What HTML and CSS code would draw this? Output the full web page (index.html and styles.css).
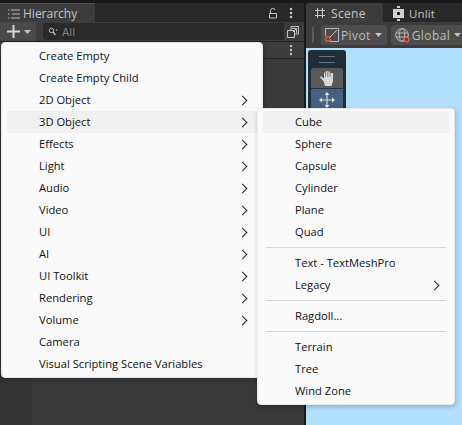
FILE: index.html
```html
<!DOCTYPE html>
<html lang="en">
<head>
<meta charset="utf-8">
<title>Hierarchy</title>
<link rel="stylesheet" href="styles.css">
</head>
<body>
<div class="editor">
  <section class="panel hierarchy">
    <div class="tabbar">
      <div class="tab tab-active">
        <svg class="ico" width="12" height="10" viewBox="0 0 12 10"><path d="M0 1h1.500M0 5h1.500M0 9h1.500M3 1h9M4 5h8M3 9h9" stroke="#bdbdbd" fill="none"/></svg>
        <span>Hierarchy</span>
      </div>
      <div class="tab-tools">
        <svg width="9" height="12" viewBox="0 0 9 12"><path d="M.5 6.500h7v4.500h-7zM1.500 6.500V3.500a2.300 2.300 0 0 1 4.500-.5" stroke="#c4c4c4" fill="none"/></svg>
        <svg width="4" height="12" viewBox="0 0 4 12"><circle cx="2" cy="2" r="1.300" fill="#c4c4c4"/><circle cx="2" cy="6" r="1.300" fill="#c4c4c4"/><circle cx="2" cy="10" r="1.300" fill="#c4c4c4"/></svg>
      </div>
    </div>
    <div class="toolbar">
      <div class="add-btn">
        <svg width="13" height="13" viewBox="0 0 13 13"><path d="M6.500 0v13M0 6.500h13" stroke="#d8d8d8" stroke-width="2" fill="none"/></svg>
        <svg width="7" height="4" viewBox="0 0 7 4"><path d="M0 0h7L3.500 4z" fill="#c4c4c4"/></svg>
      </div>
      <div class="search">
        <svg width="10" height="9" viewBox="0 0 10 9"><circle cx="3.500" cy="3.500" r="2.200" stroke="#bbb" fill="none"/><path d="M5 5l2.500 3" stroke="#bbb" stroke-width="1.300"/><path d="M7.500 2.500h2.500L8.750 4z" fill="#bbb"/></svg>
        <span>All</span>
        <div class="search-end">
          <svg width="12" height="12" viewBox="0 0 12 12"><path d="M4 4V.5h7.500V8H8M.5 4.500h7v7h-7zM5 2.500h4.500V7M9.500 2.500L6 6" stroke="#c4c4c4" fill="none"/></svg>
        </div>
      </div>
    </div>
    <div class="subbar">
      <svg width="4" height="12" viewBox="0 0 4 12"><circle cx="2" cy="2" r="1.200" fill="#c4c4c4"/><circle cx="2" cy="6" r="1.200" fill="#c4c4c4"/><circle cx="2" cy="10" r="1.200" fill="#c4c4c4"/></svg>
    </div>
    <div class="tree">
      <div class="tree-gutter"></div>
      <div class="tree-body"></div>
    </div>
  </section>

  <section class="panel scene">
    <div class="tabbar scene-tabs">
      <div class="tab scene-tab">
        <svg width="12" height="12" viewBox="0 0 12 12"><path d="M3.500 1v10M8.500 1v10M1 3.500h10M1 8.500h10" stroke="#c8c8c8" fill="none"/></svg>
        <span>Scene</span>
      </div>
      <div class="tab unlit-tab">
        <svg width="11" height="15" viewBox="0 0 11 15"><path d="M4 0h3v2H4zM0 3h11v9H0zM4 13h3v2H4z" fill="#d0d0d0"/><rect x="4" y="6" width="3" height="3" fill="#282828"/></svg>
        <span>Unlit</span>
      </div>
    </div>
    <div class="scene-toolbar">
      <div class="grip"></div>
      <div class="tool-btn">
        <svg width="14" height="14" viewBox="0 0 14 14"><path d="M3 .5h10.500V13.500H5M.5 8V.5H3M4 10l8-8" stroke="#bbb" fill="none"/><circle cx="3" cy="11" r="2.400" fill="none" stroke="#f0603a" stroke-width="1.200"/></svg>
        <span>Pivot</span>
        <svg width="7" height="4" viewBox="0 0 7 4"><path d="M0 0h7L3.500 4z" fill="#c4c4c4"/></svg>
      </div>
      <div class="tool-btn">
        <svg width="15" height="15" viewBox="0 0 15 15"><circle cx="7" cy="7" r="6.300" stroke="#bbb" fill="none"/><ellipse cx="7" cy="7" rx="2.800" ry="6.300" stroke="#bbb" fill="none"/><path d="M1 5h12M1 9h12" stroke="#bbb"/><circle cx="11.500" cy="11.500" r="2.400" fill="#4b4b4b" stroke="#f0603a" stroke-width="1.200"/></svg>
        <span>Global</span>
        <svg width="7" height="4" viewBox="0 0 7 4"><path d="M0 0h7L3.500 4z" fill="#c4c4c4"/></svg>
      </div>
    </div>
    <div class="viewport">
      <div class="overlay-tools">
        <div class="overlay-grip"></div>
        <div class="overlay-btn hand">
          <svg width="15" height="16" viewBox="0 0 15 16"><path d="M3.500 11L0 7.500l1-1.200 3 2.200V2.500h1.300V7h.7V1h1.500v6h.7V1.500h1.500V7h.7V3H13v8l-1.500 5H5z" fill="#d8d8d8"/></svg>
        </div>
        <div class="overlay-btn move">
          <svg width="16" height="16" viewBox="0 0 16 16"><path d="M8 2v12M2 8h12" stroke="#c9d6e2" stroke-width="1.200"/><path d="M8 0l2.500 3h-5zM8 16l2.500-3h-5zM0 8l3-2.500v5zM16 8l-3-2.500v5z" fill="#dbe5ee"/></svg>
        </div>
      </div>
    </div>
  </section>
</div>

<div class="menu main-menu">
  <div class="item">Create Empty</div>
  <div class="item">Create Empty Child</div>
  <div class="item arrow">2D Object</div>
  <div class="item arrow hover">3D Object</div>
  <div class="item arrow">Effects</div>
  <div class="item arrow">Light</div>
  <div class="item arrow">Audio</div>
  <div class="item arrow">Video</div>
  <div class="item arrow">UI</div>
  <div class="item arrow">AI</div>
  <div class="item arrow">UI Toolkit</div>
  <div class="item arrow">Rendering</div>
  <div class="item arrow">Volume</div>
  <div class="item">Camera</div>
  <div class="item">Visual Scripting Scene Variables</div>
</div>

<div class="menu sub-menu">
  <div class="item hover">Cube</div>
  <div class="item">Sphere</div>
  <div class="item">Capsule</div>
  <div class="item">Cylinder</div>
  <div class="item">Plane</div>
  <div class="item">Quad</div>
  <div class="sep"></div>
  <div class="item">Text - TextMeshPro</div>
  <div class="item arrow">Legacy</div>
  <div class="sep"></div>
  <div class="item">Ragdoll...</div>
  <div class="sep"></div>
  <div class="item">Terrain</div>
  <div class="item">Tree</div>
  <div class="item">Wind Zone</div>
</div>
</body>
</html>
```
FILE: styles.css
```css
* { box-sizing: border-box; }
html, body { margin: 0; padding: 0; }
body {
  width: 462px;
  height: 425px;
  overflow: hidden;
  position: relative;
  background: #191919;
  font-family: "Open Sans", "Noto Sans", sans-serif;
}
.editor { display: flex; gap: 2px; height: 425px; padding-top: 3px; }
.panel { display: flex; flex-direction: column; }
.hierarchy { width: 304px; background: #383838; }
.scene { flex: 1; min-width: 0; }
.tabbar {
  height: 19px;
  display: flex;
  background: #282828;
  flex: none;
}
.tab {
  display: flex;
  align-items: center;
  color: #c4c4c4;
  font-size: 12px;
  padding-top: 1px;
}
.tab-active {
  width: 95px;
  background: #3c3c3c;
  border-top: 1px solid #2c5d87;
  padding-left: 8px;
  gap: 3px;
}
.tab-tools {
  margin-left: auto;
  display: flex;
  align-items: center;
  gap: 11px;
  padding-right: 11px;
}
.toolbar {
  height: 20px;
  background: #3c3c3c;
  border-bottom: 1px solid #232323;
  display: flex;
  flex: none;
}
.add-btn {
  width: 36px;
  height: 19px;
  background: #4a4a4a;
  display: flex;
  align-items: center;
  gap: 4px;
  padding-left: 7px;
}
.search {
  width: 258px;
  height: 17px;
  margin: 1px 0 0 7px;
  background: #2a2a2a;
  border-radius: 4px;
  display: flex;
  align-items: center;
  padding-left: 5px;
  gap: 4px;
  color: #828282;
  font-size: 11.500px;
}
.search-end {
  margin-left: auto;
  width: 17px;
  height: 17px;
  background: #3a3a3a;
  border-radius: 0 4px 4px 0;
  display: flex;
  align-items: center;
  justify-content: center;
}
.subbar {
  height: 17px;
  background: #3c3c3c;
  border-bottom: 1px solid #232323;
  display: flex;
  justify-content: flex-end;
  align-items: center;
  padding-right: 11px;
  flex: none;
}
.tree { flex: 1; display: flex; }
.tree-gutter { width: 32px; background: #333333; }
.tree-body { flex: 1; background: #383838; }

.scene-tabs { background: #282828; }
.scene-tab {
  width: 77px;
  background: #3c3c3c;
  border-radius: 3px 3px 0 0;
  padding-left: 8px;
  gap: 5px;
  letter-spacing: .3px;
}
.unlit-tab { padding-left: 10px; gap: 5px; font-size: 11.500px; letter-spacing: .1px; }
.scene-toolbar {
  height: 26px;
  background: #3c3c3c;
  display: flex;
  align-items: center;
  padding-left: 6px;
  gap: 4px;
  flex: none;
}
.grip {
  width: 5px;
  height: 16px;
  border-left: 1px solid #5c5c5c;
  border-right: 1px solid #5c5c5c;
  margin-right: 3px;
}
.tool-btn {
  height: 20px;
  padding: 0 5px 0 4px;
  background: #4d4d4d;
  border-radius: 3px;
  display: flex;
  align-items: center;
  gap: 2px;
  color: #bdbdbd;
  font-size: 12px;
  letter-spacing: .4px;
}
.tool-btn svg:last-child { margin-left: 2px; }
.viewport {
  flex: 1;
  background: #b3e0ff;
  padding: 2px;
}
.overlay-tools {
  width: 38px;
  background: #212e3a;
  border-radius: 3px;
  padding: 0 3px;
}
.overlay-grip {
  height: 18px;
  position: relative;
}
.overlay-grip::before {
  content: "";
  display: block;
  width: 16px;
  height: 5px;
  margin: 0 auto;
  position: relative;
  top: 6px;
  border-top: 1px solid #6a7580;
  border-bottom: 1px solid #6a7580;
}
.overlay-btn {
  height: 20px;
  display: flex;
  align-items: center;
  justify-content: center;
}
.hand { background: #585858; border-radius: 3px 3px 0 0; margin-bottom: 1px; }
.move { background: #46607f; height: 30px; padding-bottom: 8px; }

.menu {
  position: absolute;
  background: #fafafa;
  border-radius: 4px;
  border: 1px solid #e8e8e8;
  box-shadow: 1px 2px 5px rgba(0, 0, 0, .22);
  color: #101018;
  font-family: "Open Sans", "Noto Sans", sans-serif;
  font-size: 11.200px;
}
.main-menu {
  left: 1px;
  top: 42px;
  width: 262px;
  height: 336px;
  padding: 2px 0 0 5px;
}
.sub-menu {
  left: 257px;
  top: 108px;
  width: 198px;
  height: 297px;
  padding: 2px 5px 0;
}
.item {
  height: 22px;
  line-height: 22px;
  padding-left: 32px;
  position: relative;
  white-space: nowrap;
}
.hover { background: #f0f0f0; border-radius: 3px; }
.arrow::after {
  content: "";
  position: absolute;
  right: 16px;
  top: 8px;
  width: 6px;
  height: 6px;
  border-top: 1px solid #222;
  border-right: 1px solid #222;
  transform: rotate(45deg);
}
.sub-menu .arrow::after { right: 11px; }
.sep {
  height: 1px;
  background: #d7d7d7;
  margin: 4px 0 4px 3px;
  width: 180px;
}
```
